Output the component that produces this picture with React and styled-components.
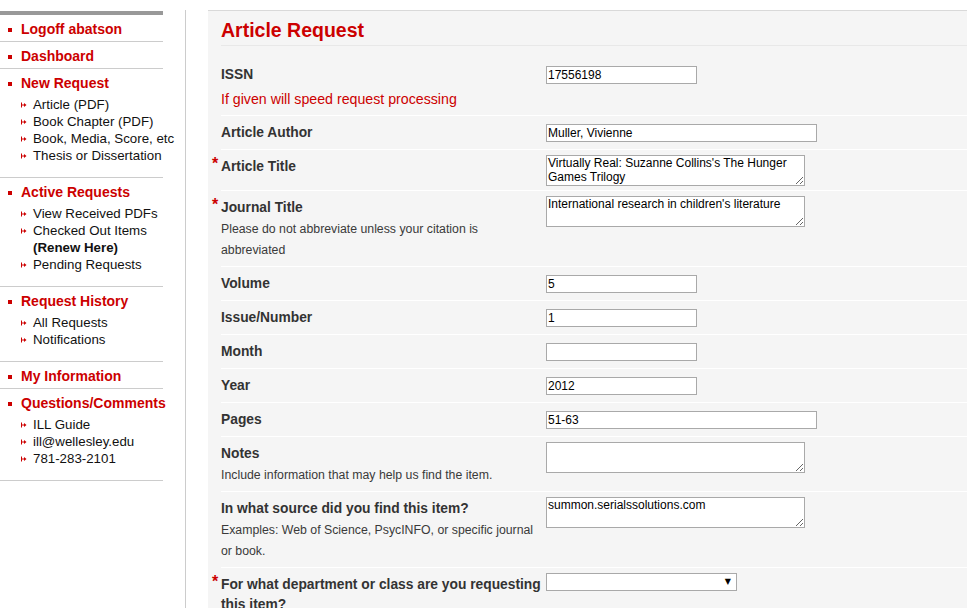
import React from 'react';
import styled, { createGlobalStyle } from 'styled-components';

const GlobalStyle = createGlobalStyle`
  html, body { margin: 0; padding: 0; background: #fff; }
  body { font-family: "Liberation Sans", Arial, sans-serif; overflow: hidden; }
`;

const menu = [
  { title: 'Logoff abatson' },
  { title: 'Dashboard' },
  { title: 'New Request', items: ['Article (PDF)', 'Book Chapter (PDF)', 'Book, Media, Score, etc', 'Thesis or Dissertation'] },
  { title: 'Active Requests', items: ['View Received PDFs', ['Checked Out Items', '(Renew Here)'], 'Pending Requests'] },
  { title: 'Request History', items: ['All Requests', 'Notifications'] },
  { title: 'My Information' },
  { title: 'Questions/Comments', items: ['ILL Guide', 'ill@wellesley.edu', '781-283-2101'] },
];

const fields = [
  { label: 'ISSN', hint: 'If given will speed request processing', redHint: true, kind: 'input', width: 151, value: '17556198' },
  { label: 'Article Author', kind: 'input', width: 271, value: 'Muller, Vivienne' },
  { label: 'Article Title', required: true, kind: 'area', value: "Virtually Real: Suzanne Collins's The Hunger Games Trilogy" },
  { label: 'Journal Title', required: true, hint: 'Please do not abbreviate unless your citation is abbreviated', kind: 'area', value: "International research in children's literature" },
  { label: 'Volume', kind: 'input', width: 151, value: '5' },
  { label: 'Issue/Number', kind: 'input', width: 151, value: '1' },
  { label: 'Month', kind: 'input', width: 151, value: '' },
  { label: 'Year', kind: 'input', width: 151, value: '2012' },
  { label: 'Pages', kind: 'input', width: 271, value: '51-63' },
  { label: 'Notes', hint: 'Include information that may help us find the item.', kind: 'area', value: '' },
  { label: 'In what source did you find this item?', hint: 'Examples: Web of Science, PsycINFO, or specific journal or book.', kind: 'area', value: 'summon.serialssolutions.com' },
  { label: 'For what department or class are you requesting this item?', required: true, kind: 'select' },
];

function Arrow() {
  return (
    <ArrowIcon width="6" height="6" viewBox="0 0 6 6">
      <path d="M0.5 0.5 V5.5 M0.5 3 H4" stroke="#cc0000" strokeWidth="1" fill="none" />
      <path d="M3 1 L5.5 3 L3 5 Z" fill="#cc0000" />
    </ArrowIcon>
  );
}

function Field({ f }) {
  if (f.kind === 'input') return <TextInput $w={f.width} defaultValue={f.value} />;
  if (f.kind === 'area') return <TextArea defaultValue={f.value} />;
  return (
    <SelectBox>
      <Select>
        <option></option>
      </Select>
      <Caret>▼</Caret>
    </SelectBox>
  );
}

export default function App() {
  return (
    <>
      <GlobalStyle />
      <Page>
        <Sidebar>
          <TopBar />
          {menu.map((sec) => (
            <Section key={sec.title}>
              <SectionTitle>{sec.title}</SectionTitle>
              {sec.items && (
                <SubList>
                  {sec.items.map((it) => {
                    const lines = Array.isArray(it) ? it : [it];
                    return (
                      <SubItem key={lines[0]}>
                        <Arrow />
                        <span>
                          {lines[0]}
                          {lines[1] && <><br /><b>{lines[1]}</b></>}
                        </span>
                      </SubItem>
                    );
                  })}
                </SubList>
              )}
            </Section>
          ))}
        </Sidebar>
        <Divider />
        <Main>
          <Heading>Article Request</Heading>
          <Form>
            {fields.map((f) => (
              <Row key={f.label}>
                <LabelCell $hint={!!f.hint}>
                  <Label>
                    {f.required && <Star>*</Star>}
                    {f.label}
                  </Label>
                  {f.hint && <Hint $red={f.redHint}>{f.hint}</Hint>}
                </LabelCell>
                <FieldCell $kind={f.kind}>
                  <Field f={f} />
                </FieldCell>
              </Row>
            ))}
          </Form>
        </Main>
      </Page>
    </>
  );
}

const Page = styled.div`
  display: flex;
  align-items: stretch;
  padding-top: 10px;
  min-height: 598px;
`;

const Sidebar = styled.nav`
  width: 163px;
  flex-shrink: 0;
  padding-top: 1px;
`;

const TopBar = styled.div`
  height: 4px;
  background: #999;
`;

const Section = styled.div`
  border-bottom: 1px solid #ccc;
  padding: 6px 0 3px;
`;

const SectionTitle = styled.div`
  position: relative;
  padding-left: 21px;
  font-size: 14px;
  line-height: 17px;
  font-weight: bold;
  color: #cc0000;
  white-space: nowrap;

  &::before {
    content: '';
    position: absolute;
    left: 8px;
    top: 7px;
    width: 4px;
    height: 4px;
    background: #cc0000;
  }
`;

const SubList = styled.ul`
  list-style: none;
  margin: 4px 0 10px;
  padding: 0 0 0 21px;
`;

const SubItem = styled.li`
  display: flex;
  align-items: flex-start;
  font-size: 13.3px;
  line-height: 17px;
  color: #111;
  white-space: nowrap;

  b { font-weight: bold; }
`;

const ArrowIcon = styled.svg`
  flex-shrink: 0;
  margin: 6px 6px 0 0;
`;

const Divider = styled.div`
  width: 1px;
  background: #ccc;
  margin: 0 22px;
  flex-shrink: 0;
`;

const Main = styled.main`
  flex: 1;
  background: #f5f5f5;
  border-top: 1px solid #d9d9d9;
  padding: 0 0 0 13px;
`;

const Heading = styled.h1`
  margin: 8px 0 0;
  padding-bottom: 4px;
  font-size: 19.5px;
  line-height: 22px;
  font-weight: bold;
  color: #cc0000;
  border-bottom: 1px solid #e8e8e8;
`;

const Form = styled.div`
  padding-top: 12px;
`;

const Row = styled.div`
  display: flex;
  align-items: flex-start;
  border-bottom: 1px solid #fff;
`;

const LabelCell = styled.div`
  width: 325px;
  flex-shrink: 0;
  padding: 7px 0 ${(p) => (p.$hint ? '5px' : '6px')};
`;

const Label = styled.div`
  position: relative;
  font-size: 13.8px;
  line-height: 20px;
  font-weight: bold;
  color: #333;
`;

const Star = styled.span`
  position: absolute;
  left: -9px;
  top: -3px;
  font-size: 16px;
  color: #cc0000;
  font-weight: bold;
`;

const Hint = styled.div`
  max-width: 319px;
  margin-top: ${(p) => (p.$red ? '4px' : '1px')};
  font-size: ${(p) => (p.$red ? '14.2px' : '12.3px')};
  line-height: 21px;
  color: ${(p) => (p.$red ? '#cc0000' : '#3a3a3a')};
`;

const FieldCell = styled.div`
  padding-top: ${(p) => (p.$kind === 'input' ? '7px' : '5px')};
  padding-bottom: 4px;
`;

const TextInput = styled.input`
  box-sizing: border-box;
  width: ${(p) => p.$w}px;
  height: 18px;
  margin: 0;
  padding: 0 1px;
  border: 1px solid #a9a9a9;
  background: #fff;
  font-family: "Liberation Sans", Arial, sans-serif;
  font-size: 12px;
  color: #000;
  outline: none;
`;

const TextArea = styled.textarea`
  display: block;
  box-sizing: border-box;
  width: 259px;
  height: 31px;
  margin: 0;
  padding: 0 1px;
  border: 1px solid #a9a9a9;
  background: #fff;
  font-family: "Liberation Sans", Arial, sans-serif;
  font-size: 12px;
  line-height: 14px;
  color: #000;
  overflow: hidden;
  outline: none;
`;

const SelectBox = styled.div`
  position: relative;
  width: 191px;
  height: 18px;
`;

const Select = styled.select`
  appearance: none;
  box-sizing: border-box;
  display: block;
  width: 100%;
  height: 100%;
  margin: 0;
  padding: 0;
  border: 1px solid #a9a9a9;
  border-radius: 0;
  background: #fff;
  font-size: 12px;
  outline: none;
`;

const Caret = styled.span`
  position: absolute;
  right: 6px;
  top: 4px;
  font-family: "DejaVu Sans", sans-serif;
  font-size: 8px;
  line-height: 10px;
  color: #000;
  pointer-events: none;
`;
